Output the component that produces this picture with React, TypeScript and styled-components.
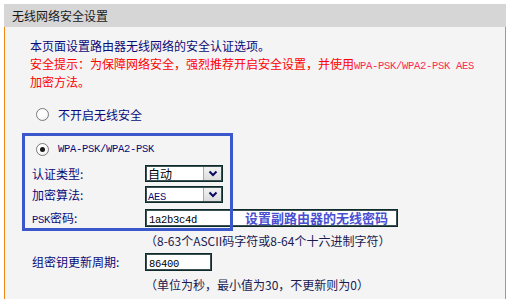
import styled, { createGlobalStyle } from 'styled-components'

const GlobalStyle = createGlobalStyle`
  body {
    margin: 0;
    background: #ffffff;
    font-family: 'Noto Sans CJK SC', 'Noto Sans', sans-serif;
    font-size: 12px;
  }
`

const Panel = styled.div`
  margin: 4px 0 0 4px;
  width: 502px;
`

const Header = styled.div`
  height: 23px;
  line-height: 23px;
  padding-left: 8px;
  background: #d6d6d6;
  color: #1a1a1a;
`

const Body = styled.div`
  position: relative;
  height: 280px;
  box-sizing: border-box;
  padding: 10px 0 0 25px;
  background: #f4f4f4;
  border-left: 1px solid #f08a12;
  border-right: 1px solid #f08a12;
`

const Line = styled.div<{ $tone?: 'info' | 'warn' }>`
  height: 18px;
  line-height: 18px;
  color: ${(p) => (p.$tone === 'warn' ? '#ff0000' : '#0a0a78')};
  white-space: nowrap;
`

const Mono = styled.span<{ $color?: string }>`
  font-family: 'Liberation Mono', monospace;
  font-size: 10.5px;
  letter-spacing: -0.3px;
  line-height: 1;
  color: ${(p) => p.$color || '#0a0a78'};
`

const RadioRow = styled.label<{ $top: number }>`
  display: flex;
  align-items: center;
  gap: 9px;
  height: 18px;
  margin: ${(p) => p.$top}px 0 0 6px;
  color: #0a0a78;
`

const Radio = styled.span<{ $checked?: boolean }>`
  position: relative;
  width: 13px;
  height: 13px;
  box-sizing: border-box;
  border: 1px solid #7a7a7a;
  border-radius: 50%;
  background: radial-gradient(circle at 40% 35%, #ffffff 40%, #e6e6e6 100%);
  &::after {
    content: '';
    display: ${(p) => (p.$checked ? 'block' : 'none')};
    position: absolute;
    left: 3px;
    top: 3px;
    width: 5px;
    height: 5px;
    border-radius: 50%;
    background: #1a1a1a;
  }
`

const FormRow = styled.div<{ $top: number; $height: number }>`
  display: grid;
  grid-template-columns: 113px auto;
  align-items: center;
  height: ${(p) => p.$height}px;
  line-height: ${(p) => p.$height}px;
  margin: ${(p) => p.$top}px 0 0 2px;
  color: #0a0a78;
`

const Select = styled.div`
  display: flex;
  align-items: stretch;
  width: 78px;
  height: 17px;
  box-sizing: border-box;
  border: 1px solid #0f2a2a;
  box-shadow: inset 0 0 0 1px #3c5252;
  background: #ffffff;
`

const SelectValue = styled.span`
  flex: 1;
  padding-left: 2px;
  line-height: 15px;
  color: #000000;
`

const DropButton = styled.span`
  display: flex;
  align-items: center;
  justify-content: center;
  width: 17px;
  margin: 1px 1px 1px 0;
  background: linear-gradient(#f2f2f2, #dcdcdc);
  border-left: 1px solid #a8a8a8;
`

const Input = styled.div<{ $width: number }>`
  position: relative;
  width: ${(p) => p.$width}px;
  height: 18px;
  box-sizing: border-box;
  border: 1px solid #0f2a2a;
  box-shadow: inset 0 0 0 1px #3c5252;
  background: #ffffff;
  padding-left: 3px;
  line-height: 16px;
`

const Note = styled.span`
  position: absolute;
  left: 99px;
  top: 0;
  line-height: 16px;
  font-size: 13px;
  font-weight: bold;
  color: #4a4fd2;
  white-space: nowrap;
`

const Hint = styled.div<{ $top: number }>`
  height: 18px;
  margin: ${(p) => p.$top}px 0 0 115px;
  line-height: 18px;
  color: #1a1a50;
  white-space: nowrap;
`

const Highlight = styled.div`
  position: absolute;
  left: 17px;
  top: 106px;
  width: 211px;
  height: 98px;
  box-sizing: border-box;
  border: 3px solid #3a58cc;
  pointer-events: none;
`

const Chevron = () => (
  <svg width="10" height="7" viewBox="0 0 10 7">
    <path d="M1.5 1.5 L5 5 L8.5 1.5" fill="none" stroke="#0a0a60" strokeWidth="2" />
  </svg>
)

const App = () => {
  return (
    <>
      <GlobalStyle />
      <Panel>
        <Header>无线网络安全设置</Header>
        <Body>
          <Line>本页面设置路由器无线网络的安全认证选项。</Line>
          <Line $tone="warn">
            安全提示：为保障网络安全，强烈推荐开启安全设置，并使用
            <Mono $color="#ff2a55">WPA-PSK/WPA2-PSK AES</Mono>
          </Line>
          <Line $tone="warn">加密方法。</Line>

          <RadioRow $top={14}>
            <Radio />
            不开启无线安全
          </RadioRow>
          <RadioRow $top={17}>
            <Radio $checked />
            <Mono>WPA-PSK/WPA2-PSK</Mono>
          </RadioRow>

          <FormRow $top={7} $height={17}>
            <span>认证类型:</span>
            <Select>
              <SelectValue>自动</SelectValue>
              <DropButton>
                <Chevron />
              </DropButton>
            </Select>
          </FormRow>
          <FormRow $top={4} $height={17}>
            <span>加密算法:</span>
            <Select>
              <SelectValue>
                <Mono>AES</Mono>
              </SelectValue>
              <DropButton>
                <Chevron />
              </DropButton>
            </Select>
          </FormRow>
          <FormRow $top={6} $height={18}>
            <span>
              <Mono>PSK</Mono>密码:
            </span>
            <Input $width={253}>
              <Mono $color="#000000">1a2b3c4d</Mono>
              <Note>设置副路由器的无线密码</Note>
            </Input>
          </FormRow>
          <Hint $top={5}>（8-63个ASCII码字符或8-64个十六进制字符）</Hint>

          <FormRow $top={3} $height={18}>
            <span>组密钥更新周期:</span>
            <Input $width={67}>
              <Mono $color="#000000">86400</Mono>
            </Input>
          </FormRow>
          <Hint $top={5}>（单位为秒，最小值为30，不更新则为0）</Hint>

          <Highlight />
        </Body>
      </Panel>
    </>
  )
}

export default App
